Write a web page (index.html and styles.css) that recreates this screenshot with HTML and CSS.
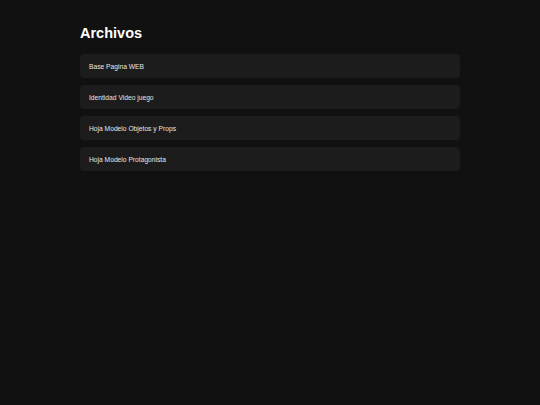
FILE: index.html
```html
<!DOCTYPE html>
<html lang="es">
<head>
<meta charset="utf-8">
<link rel="stylesheet" href="styles.css">
</head>
<body>
<main class="page">
  <h1 class="title">Archivos</h1>
  <ul class="files">
    <li class="file">Base Pagina WEB</li>
    <li class="file">Identidad Video juego</li>
    <li class="file">Hoja Modelo Objetos y Props</li>
    <li class="file">Hoja Modelo Protagonista</li>
  </ul>
</main>
</body>
</html>
```

FILE: styles.css
```css
html, body {
  margin: 0;
  padding: 0;
  background: #111111;
  height: 100%;
}
body {
  font-family: "Liberation Sans", Arial, sans-serif;
  color: #f0f0f0;
}
.page {
  width: 380px;
  margin: 0 auto;
  padding-top: 25px;
}
.title {
  margin: 0 0 12px 0;
  font-size: 14.5px;
  line-height: 17px;
  font-weight: bold;
  color: #ffffff;
}
.files {
  list-style: none;
  margin: 0;
  padding: 0;
  display: flex;
  flex-direction: column;
  gap: 7px;
}
.file {
  height: 24px;
  display: flex;
  align-items: center;
  padding: 0 9px;
  background: #1c1c1c;
  border-radius: 4px;
  font-size: 6.7px;
  color: #e6e6e6;
}
```
